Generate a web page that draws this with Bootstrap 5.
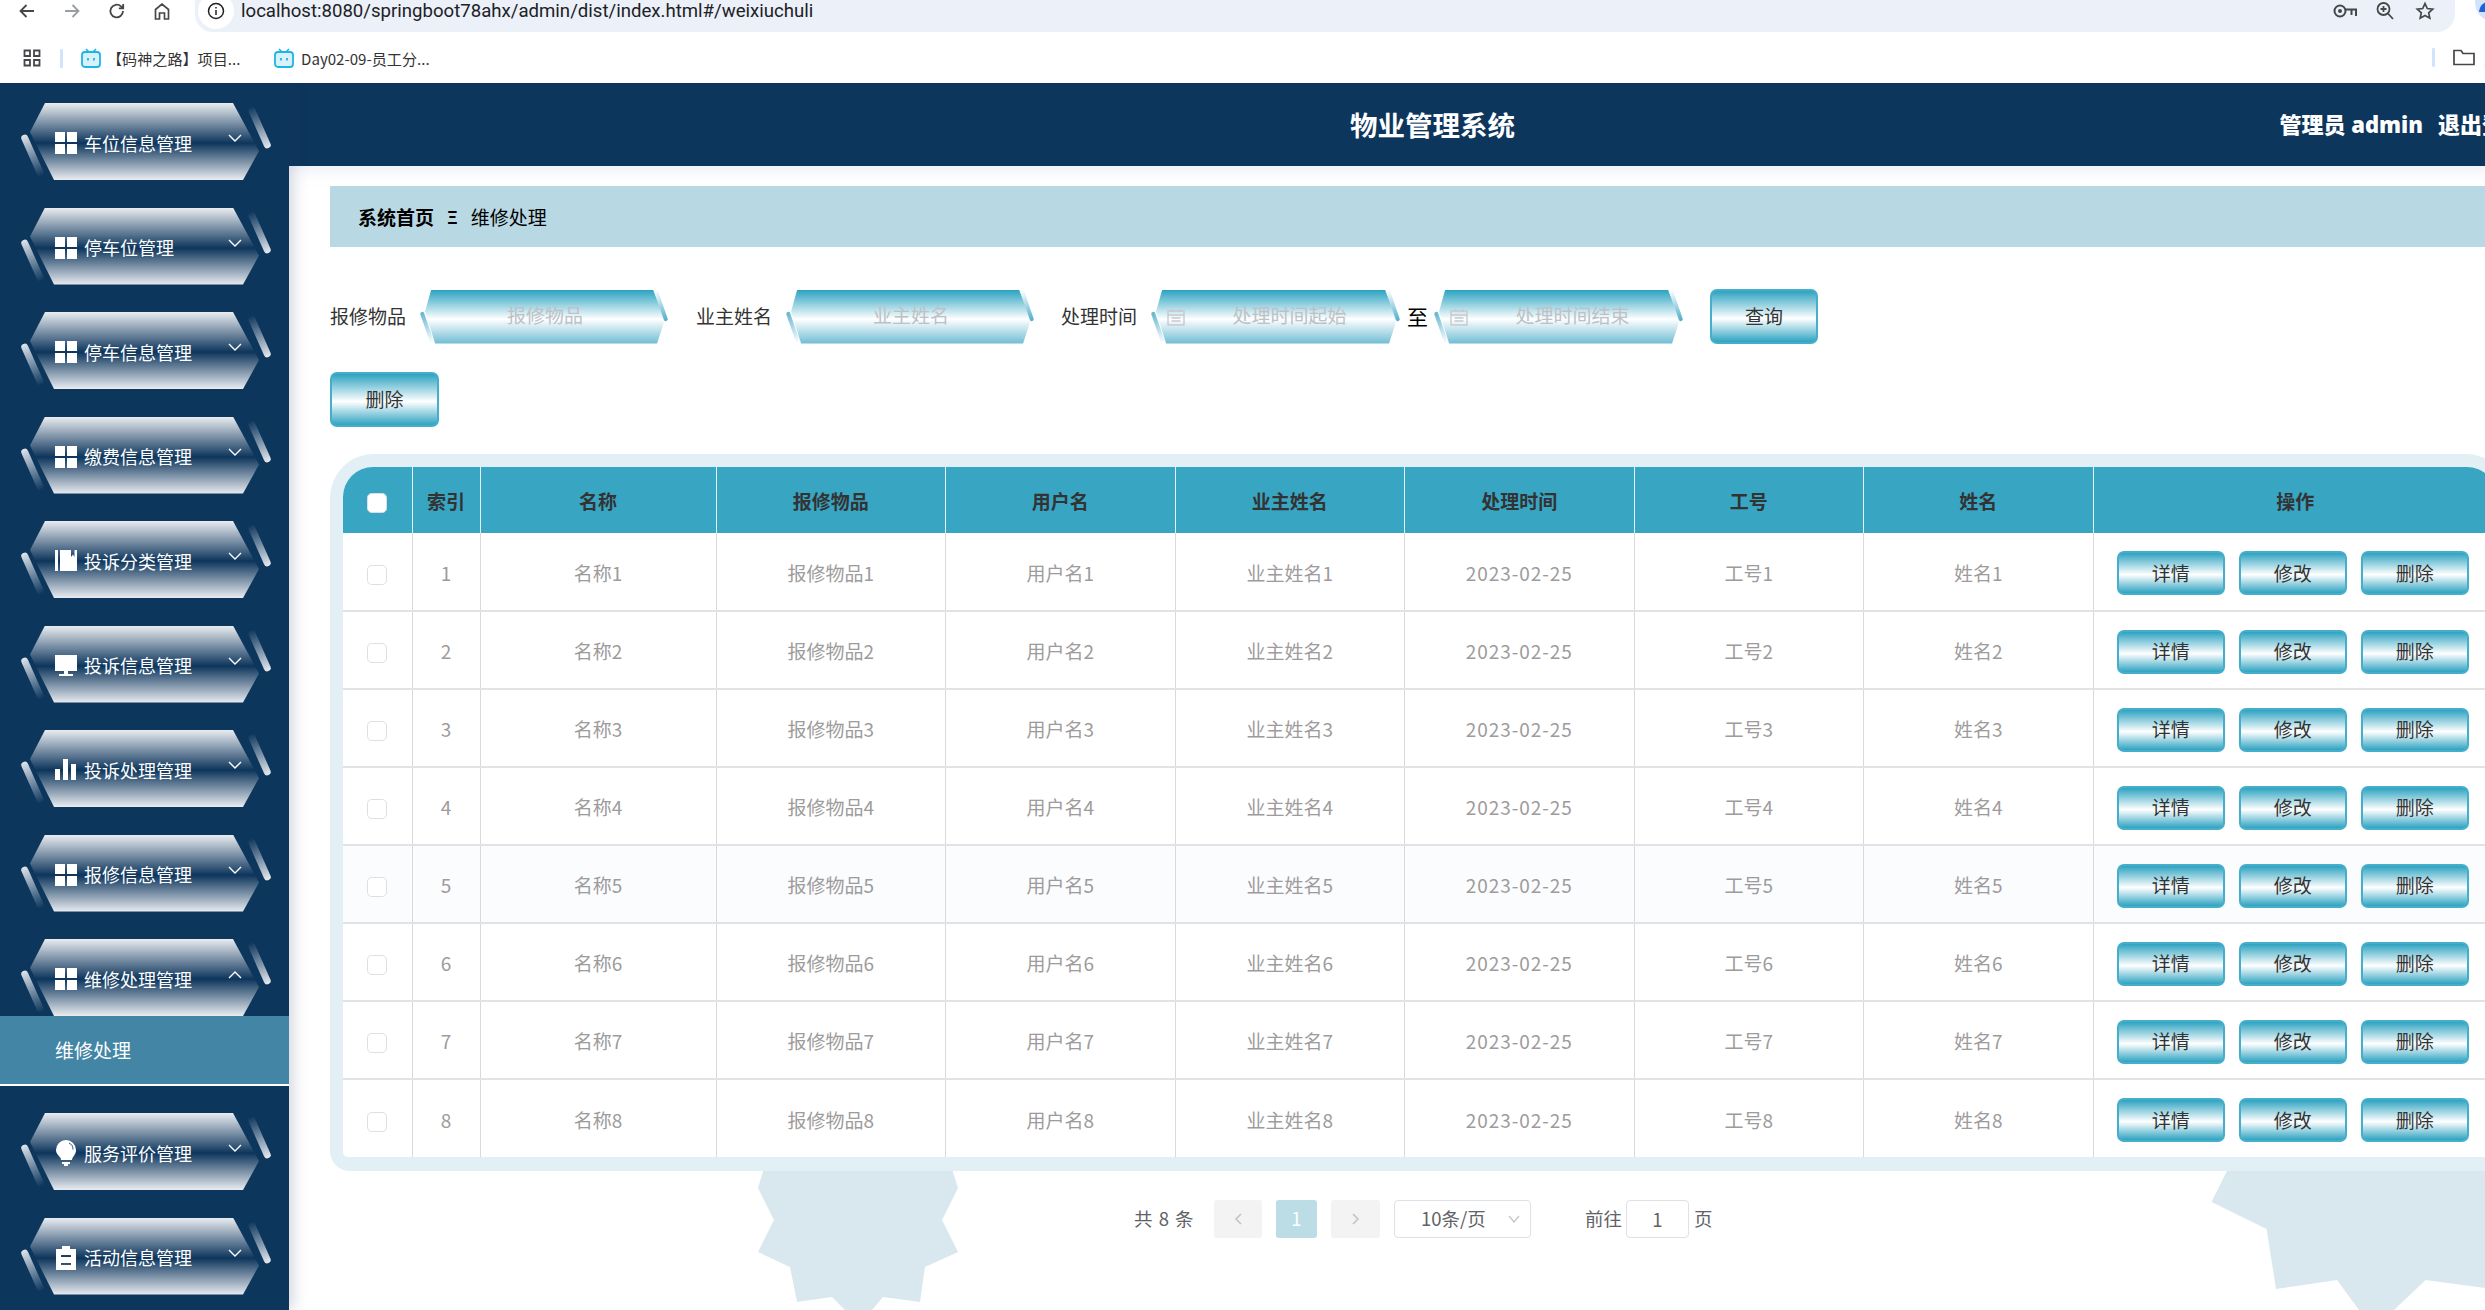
<!doctype html>
<html lang="zh-CN">
<head>
<meta charset="utf-8">
<title>物业管理系统</title>
<link href="https://cdn.jsdelivr.net/npm/bootstrap@5.3.0/dist/css/bootstrap.min.css" rel="stylesheet">
<style>
html,body{height:100%;margin:0;overflow:hidden;background:#fff}
body{font-family:"Noto Sans CJK SC","Noto Sans",sans-serif;font-size:19px;color:#333;width:2485px;height:1310px}
/* browser chrome */
.browser-top{height:83px;position:relative;background:#fff;overflow:hidden}
.tool-row{height:22px;display:flex;align-items:center}
.tool-ico{width:20px;height:20px;flex:none;display:block}
.tool-key{width:24px;height:16px;margin-right:-2px}
.tool-back{margin-left:17px}.tool-fwd{margin-left:25px}.tool-reload{margin-left:25px}.tool-home{margin-left:25px}
.addr-pill{margin-left:23px;flex:none;width:2260px;height:32px;align-self:flex-start;padding-bottom:10px;background:#ebf0f9;border-radius:0 0 18px 18px;display:flex;align-items:center}
.addr-info{width:36px;height:36px;border-radius:50%;background:#fff;flex:none;margin-left:3px;margin-top:-14px;margin-bottom:-14px;display:flex;align-items:center;justify-content:center}
.addr-text{font-family:Roboto,"Liberation Sans",sans-serif;font-size:18.6px;color:#202124;margin-left:7px;white-space:nowrap;line-height:22px}
.addr-tools{margin-left:auto;display:flex;align-items:center;gap:20px;margin-right:20px}
.avatar-dot{width:40px;height:40px;border-radius:50%;background:#d3e3fd;margin:-18px 0 0 20px;flex:none;overflow:hidden}
.mark-row{height:61px;display:flex;align-items:center;padding-top:11px;font-size:15.1px;color:#333;white-space:nowrap}
.apps-ico{margin-left:23px;width:18px;height:18px}
.mark-sep{width:3px;height:19px;background:#d3e3fd;flex:none;margin-left:19px;border-radius:1px}
.tv-ico{width:20px;height:20px;flex:none}
.mark-one{margin-left:18px;display:flex;align-items:center;gap:6px;width:193px}
.mark-one span{display:block;width:128px}
.mark-two{display:flex;align-items:center;gap:7px}
.mark-end{margin-left:auto;display:flex;align-items:center;margin-right:-60px}
.mark-end svg{margin-left:18px;margin-right:10px}
/* shell */
.app-shell{display:flex;height:1227px;overflow:hidden}
.side-panel{width:289px;flex:none;background:#0d365d;padding-top:20px;position:relative;z-index:3;box-shadow:4px 0 14px rgba(40,50,90,.2);overflow:hidden}
.side-menu{list-style:none;margin:0;padding:0}
.side-entry{position:relative;height:77px;margin-bottom:27.5px}
.side-entry.is-open{margin-bottom:0}
.side-entry::before,.side-entry::after{content:"";position:absolute;width:7px;height:45px;border-radius:4px;transform:rotate(-24deg)}
.side-entry::before{left:29px;top:30px;background:linear-gradient(#dfe5ec,rgba(223,229,236,0))}
.side-entry::after{left:256px;top:2px;background:linear-gradient(rgba(223,229,236,0),#e6eaef)}
.side-link{display:flex;align-items:center;height:77px;margin-left:30px;width:229px;padding:3px 0 0 25px;color:#fff;font-size:18px;text-decoration:none;white-space:nowrap;
 background:linear-gradient(#eaedf1,#0d355c 52%,#eaedf1);clip-path:polygon(15px 0,203px 0,229px 48px,213px 77px,24px 77px,0 29px)}
.side-link:hover{color:#fff}
.side-glyph{width:22px;height:22px;flex:none;margin-right:7px;fill:#fff}
.side-glyph.glyph-tall{height:26px}
.side-glyph.glyph-clip{height:24px}
.side-chev{width:14px;height:9px;flex:none;margin-left:auto;margin-right:17px;margin-top:-9px;fill:none;stroke:#fff;stroke-width:1.4}
.side-sub{background:#4285a5;height:68px;border-bottom:0;display:flex;align-items:center;padding-left:55px;color:#fff;font-size:19px;text-decoration:none;margin-bottom:2px}
.side-sub:hover{color:#fff}
.side-rule{height:2px;background:#fff;margin-top:-2px;margin-bottom:27px}
/* main */
.main-col{flex:1 1 auto;min-width:0;position:relative;overflow:hidden;background:#fff}
.site-bar{width:2288px;height:83px;background:#0d365d;display:flex;align-items:center;padding:0 51px 0 0;color:#fff;box-shadow:0 4px 16px rgba(90,120,200,.13);position:relative;z-index:1}
.site-title{margin-left:1061px;font-size:27.5px;font-weight:700;white-space:nowrap}
.site-user{margin-left:auto;font-size:22px;font-weight:700;display:flex;gap:15px;white-space:nowrap}
.site-user b{font-family:"Noto Sans","Noto Sans CJK SC",sans-serif}
.work-area{width:2180px;margin-left:41px;position:relative;padding-top:20px}
.crumb-bar{--bs-breadcrumb-divider:"Ξ";--bs-breadcrumb-item-padding-x:13px;--bs-breadcrumb-margin-bottom:0;--bs-breadcrumb-divider-color:#000;background:#b8d9e3;height:61px;padding:0 0 0 28px;align-items:center;color:#000;font-size:19px;margin:0}
.crumb-bar .breadcrumb-item{color:#000;line-height:1}
.crumb-bar .breadcrumb-item:first-child{font-weight:700}
.crumb-bar .breadcrumb-item+.breadcrumb-item::before{font-weight:700;font-size:17px;line-height:19px}
.query-row{margin-top:42px;height:55px;display:flex;align-items:center}
.query-label{width:76px;flex:none;margin-right:19px;white-space:nowrap;color:#333}
.hex-field{position:relative;width:240px;height:54px;flex:none}
.hex-field.is-wide{width:241px}
.hex-field::before,.hex-field::after{content:"";position:absolute;width:4px;height:33px;border-radius:2px;transform:rotate(-19deg)}
.hex-field::before{left:0;top:21px;background:linear-gradient(#5fb5cf,#fff)}
.hex-field::after{left:234px;top:-1px;background:linear-gradient(#fff,#4fadca)}
.hex-field.is-wide::after{left:235px}
.hex-input{height:54px;border:0;border-radius:0;padding:0 10px 4px;text-align:center;font-size:19px;color:#333;
 background:linear-gradient(#2ba3c1,#fff 54%,#6ebcd3);clip-path:polygon(2.6% 0,95% 0,100% 55%,96.7% 100%,4.2% 100%,0 41%)}
.hex-input::placeholder{color:#bfc0c5;opacity:1}
.hex-input:focus{background:linear-gradient(#2ba3c1,#fff 54%,#6ebcd3);box-shadow:none}
.hex-input.has-ico{padding-left:36px}
.cal-ico{position:absolute;left:11px;top:18px;width:18px;height:18px;fill:none;stroke:#c8c9cd;stroke-width:1.4;z-index:1}
.query-gap{margin-left:31px}
.query-gap.gap-b{margin-left:30px}
.query-to{width:21px;margin:0 11px 0 10px;font-size:21px;color:#000;flex:none;line-height:1}
.gloss-btn{--bs-btn-padding-x:0;--bs-btn-padding-y:0;--bs-btn-font-size:19px;--bs-btn-color:#333;--bs-btn-hover-color:#333;--bs-btn-border-width:2px;--bs-btn-border-color:#45aecb;--bs-btn-hover-border-color:#45aecb;--bs-btn-border-radius:7px;
 background:linear-gradient(#2ea3c1,#fff 54%,#2ea3c1);flex:none}
.gloss-btn:hover{background:linear-gradient(#2ea3c1,#fff 54%,#2ea3c1)}
.btn-query{width:108px;height:55px;margin-left:30px}
.btn-remove{width:109px;height:55px}
.action-row{margin-top:28px;height:55px}
.grid-shell{margin-top:27px;width:2180px;padding:13px 13px 14px;background:#e2eff4;border-radius:44px 44px 20px 20px;position:relative;z-index:1}
.grid-inner{background:#fff;border-radius:30px 30px 5px 5px;overflow:hidden}
.repair-grid{--bs-table-bg:transparent;--bs-table-border-color:#dcdcdc;table-layout:fixed;width:2154px;margin:0;border-collapse:collapse;color:#9d9b9b;font-size:19px;text-align:center}
.repair-grid>:not(caption)>*>*{padding:3px 0 0;vertical-align:middle;border-width:0 1px 2px 1px;border-style:solid;border-color:#dcdcdc #d9d9d9 #e0e2e6;background:transparent;color:#9d9b9b;box-shadow:none}
.repair-grid tr>*:first-child{border-left:0}
.repair-grid tr>*:last-child{border-right:0}
.repair-grid tbody tr:last-child td{border-bottom:0}
.repair-grid>thead>tr>th{height:66px;padding-top:3px;background:#38a5c3;color:#333;font-weight:700;border-color:#e4f1f5;border-bottom:0}
.repair-grid tbody td{height:78px}
.repair-grid>tbody>tr.row-hover>td{background:#fbfcfe}
.date-cell{letter-spacing:.95px}
.c-a{width:69px}.c-b{width:68px}.c-c{width:236px}.c-d{width:229.5px}.c-e{width:229.5px}
.tick-box{width:20px;height:20px;margin:0;border:1.5px solid #dcdfe6;border-radius:3px;vertical-align:middle;float:none;position:relative;top:-1px}
.tick-box.form-check-input{margin-top:0}
.row-btns{display:flex;gap:13.5px;padding-left:23px}
.row-btns .gloss-btn{width:108.5px;height:44px}
.pager-row{margin-top:28px;height:39px;display:flex;align-items:center;padding-left:804px;font-size:18.5px;color:#606266;white-space:nowrap;position:relative;z-index:1}
.pager-total{word-spacing:2px;width:61px;flex:none}
.pager-cell{height:38px;display:flex;align-items:center;justify-content:center;border-radius:3px;background:#f3f3f4;color:#c0c4cc;flex:none}
.pager-prev{width:48px;margin-left:19px}
.pager-cur{width:41px;margin-left:14px;background:#bcdce6;color:#fff}
.pager-next{width:49px;margin-left:14px}
.pager-size{margin-left:14px;width:137px;height:38px;flex:none;border:1.5px solid #dfe0e8;border-radius:4px;display:flex;align-items:center;padding-left:26px;color:#606266}
.pager-size svg{margin-left:auto;margin-right:10px;width:12px;height:8px;fill:none;stroke:#c0c4cc;stroke-width:1.2}
.pager-goto{margin-left:54px;width:37px;flex:none}
.pager-input{width:63px;height:38px;flex:none;margin:0 5px 0 4px;border:1.5px solid #dfe0e8;border-radius:4px;text-align:center;padding:0;font-size:18.5px;color:#606266}
.gear-back{position:absolute;left:0;top:0;width:2196px;height:1227px;z-index:0;fill:#d9e8ee;pointer-events:none}
</style>
</head>
<body>
<div class="browser-top">
  <div class="tool-row">
    <svg class="tool-ico tool-back" viewBox="0 0 20 20" fill="none" stroke="#45474a" stroke-width="1.8"><path d="M17 10H4M9.5 4 3.5 10l6 6"/></svg>
    <svg class="tool-ico tool-fwd" viewBox="0 0 20 20" fill="none" stroke="#9a9da1" stroke-width="1.8"><path d="M3 10h13M10.5 4l6 6-6 6"/></svg>
    <svg class="tool-ico tool-reload" viewBox="0 0 20 20" fill="none" stroke="#45474a" stroke-width="1.8"><path d="M16 10a6.3 6.3 0 1 1-2-4.6L16 7.2M16.2 3v4.4h-4.4"/></svg>
    <svg class="tool-ico tool-home" viewBox="0 0 20 20" fill="none" stroke="#45474a" stroke-width="1.7"><path d="M3.5 18V8.5L10 3l6.5 5.5V18h-4v-6h-5v6z"/></svg>
    <div class="addr-pill">
      <div class="addr-info"><svg width="18" height="18" viewBox="0 0 18 18" fill="none" stroke="#202124" stroke-width="1.5"><circle cx="9" cy="9" r="7.5"/><path d="M9 8v5M9 5v1.5"/></svg></div>
      <div class="addr-text">localhost:8080/springboot78ahx/admin/dist/index.html#/weixiuchuli</div>
      <div class="addr-tools">
        <svg class="tool-ico tool-key" viewBox="0 0 24 16" fill="none" stroke="#45474a" stroke-width="2"><circle cx="7" cy="8" r="5.5"/><circle cx="7" cy="8" r="2" fill="#45474a" stroke="none"/><path d="M12.5 6.5H23V13M18.5 7v5"/></svg>
        <svg class="tool-ico" viewBox="0 0 20 20" fill="none" stroke="#45474a" stroke-width="1.8"><circle cx="8.5" cy="8" r="6"/><path d="M13 12.5l5 5.5M5.5 8h6M8.5 5v6"/></svg>
        <svg class="tool-ico" viewBox="0 0 20 20" fill="none" stroke="#45474a" stroke-width="1.7"><path d="M10 2.5l2.3 5 5.400.6-4 3.700 1.100 5.400-4.800-2.700-4.800 2.700 1.100-5.400-4-3.700 5.400-.6z"/></svg>
      </div>
    </div>
    <div class="avatar-dot"><svg width="40" height="40" viewBox="0 0 40 40" fill="#1a62d6"><circle cx="15" cy="13" r="6"/><path d="M4 30c1-8 6-10 11-10s10 2 11 10z"/></svg></div>
  </div>
  <div class="mark-row">
    <svg class="apps-ico" viewBox="0 0 18 18" fill="none" stroke="#45474a" stroke-width="1.8"><path d="M1.5 1.5h5.5v5.500H1.5zM11 1.500h5.500v5.500H11zM1.500 11h5.500v5.500H1.500zM11 11h5.500v5.500H11z"/></svg>
    <div class="mark-sep"></div>
    <div class="mark-one"><svg class="tv-ico" viewBox="0 0 20 20"><path d="M5 1l3 3M15 1l-3 3" stroke="#1db4e8" stroke-width="1.6" fill="none"/><rect x="1" y="4" width="18" height="15" rx="3" fill="#d8f2fb" stroke="#1db4e8" stroke-width="1.8"/><path d="M7 10v2.500M13 10v2.500" stroke="#1db4e8" stroke-width="1.8"/></svg><span>【码神之路】项目...</span></div>
    <div class="mark-two"><svg class="tv-ico" viewBox="0 0 20 20"><path d="M5 1l3 3M15 1l-3 3" stroke="#1db4e8" stroke-width="1.6" fill="none"/><rect x="1" y="4" width="18" height="15" rx="3" fill="#d8f2fb" stroke="#1db4e8" stroke-width="1.8"/><path d="M7 10v2.500M13 10v2.500" stroke="#1db4e8" stroke-width="1.8"/></svg><span>Day02-09-员工分...</span></div>
    <div class="mark-end"><div class="mark-sep"></div><svg width="22" height="17" viewBox="0 0 22 17" fill="none" stroke="#45474a" stroke-width="1.7"><path d="M1 15.500V1.500h7l2 3h11v11z"/></svg><span>所有书签</span></div>
  </div>
</div>
<div class="app-shell">
  <aside class="side-panel">
    <ul class="side-menu">
      <li class="side-entry"><a class="side-link" href="#"><svg class="side-glyph" viewBox="0 0 22 22"><path d="M0 0h10v10H0zM12 0h10v10H12zM0 12h10v10H0zM12 12h10v10H12z"/></svg>车位信息管理<svg class="side-chev" viewBox="0 0 14 9"><path d="M1 1l6 6 6-6"/></svg></a></li>
      <li class="side-entry"><a class="side-link" href="#"><svg class="side-glyph" viewBox="0 0 22 22"><path d="M0 0h10v10H0zM12 0h10v10H12zM0 12h10v10H0zM12 12h10v10H12z"/></svg>停车位管理<svg class="side-chev" viewBox="0 0 14 9"><path d="M1 1l6 6 6-6"/></svg></a></li>
      <li class="side-entry"><a class="side-link" href="#"><svg class="side-glyph" viewBox="0 0 22 22"><path d="M0 0h10v10H0zM12 0h10v10H12zM0 12h10v10H0zM12 12h10v10H12z"/></svg>停车信息管理<svg class="side-chev" viewBox="0 0 14 9"><path d="M1 1l6 6 6-6"/></svg></a></li>
      <li class="side-entry"><a class="side-link" href="#"><svg class="side-glyph" viewBox="0 0 22 22"><path d="M0 0h10v10H0zM12 0h10v10H12zM0 12h10v10H0zM12 12h10v10H12z"/></svg>缴费信息管理<svg class="side-chev" viewBox="0 0 14 9"><path d="M1 1l6 6 6-6"/></svg></a></li>
      <li class="side-entry"><a class="side-link" href="#"><svg class="side-glyph" viewBox="0 0 22 22"><path d="M0 0h3v21H0zM5 0h11v7l2-2.5L19.500 7V0H22v21H5z"/></svg>投诉分类管理<svg class="side-chev" viewBox="0 0 14 9"><path d="M1 1l6 6 6-6"/></svg></a></li>
      <li class="side-entry"><a class="side-link" href="#"><svg class="side-glyph" viewBox="0 0 22 22"><path d="M0 0h22v16H13v3h5v2H4v-2h5v-3H0z"/></svg>投诉信息管理<svg class="side-chev" viewBox="0 0 14 9"><path d="M1 1l6 6 6-6"/></svg></a></li>
      <li class="side-entry"><a class="side-link" href="#"><svg class="side-glyph" viewBox="0 0 22 22"><path d="M0 10h5v11H0zM8 0h5v21H8zM16 5h5v16h-5z"/></svg>投诉处理管理<svg class="side-chev" viewBox="0 0 14 9"><path d="M1 1l6 6 6-6"/></svg></a></li>
      <li class="side-entry"><a class="side-link" href="#"><svg class="side-glyph" viewBox="0 0 22 22"><path d="M0 0h10v10H0zM12 0h10v10H12zM0 12h10v10H0zM12 12h10v10H12z"/></svg>报修信息管理<svg class="side-chev" viewBox="0 0 14 9"><path d="M1 1l6 6 6-6"/></svg></a></li>
      <li class="side-entry is-open"><a class="side-link" href="#"><svg class="side-glyph" viewBox="0 0 22 22"><path d="M0 0h10v10H0zM12 0h10v10H12zM0 12h10v10H0zM12 12h10v10H12z"/></svg>维修处理管理<svg class="side-chev" viewBox="0 0 14 9"><path d="M1 8l6-6 6 6"/></svg></a></li>
      <li><a class="side-sub" href="#">维修处理</a><div class="side-rule"></div></li>
      <li class="side-entry"><a class="side-link" href="#"><svg class="side-glyph glyph-tall" viewBox="0 0 22 26"><path d="M11 0a10 10 0 0 1 10 10c0 4-2.5 6-3.5 8-.5 1-.5 2-.5 2H6s0-1-.5-2C4.500 16 1 14 1 10A10 10 0 0 1 11 0zM7 22h8v2H13v2H9v-2H7z"/><path d="M14 3a7 7 0 0 1 4 6.500" fill="none" stroke="#2b5577" stroke-width="1"/></svg>服务评价管理<svg class="side-chev" viewBox="0 0 14 9"><path d="M1 1l6 6 6-6"/></svg></a></li>
      <li class="side-entry"><a class="side-link" href="#"><svg class="side-glyph glyph-clip" viewBox="0 0 22 24"><path d="M1 3h6V0h8v3h6v21H1zM6 9v2h10V9zM6 17v2h10v-2z" fill-rule="evenodd"/></svg>活动信息管理<svg class="side-chev" viewBox="0 0 14 9"><path d="M1 1l6 6 6-6"/></svg></a></li>
    </ul>
  </aside>
  <main class="main-col">
    <svg class="gear-back" viewBox="0 0 2196 1227">
      <path d="M501 1000H636L669 1105L653 1137L669 1169L636 1184L631 1219L594 1214L583 1227H556L543 1214L508 1219L501 1184L469 1169L485 1137L469 1105Z"/>
      <path d="M1938 1088L1922.500 1119L1977.600 1146L1987 1206L2048 1197L2070 1227H2105L2136.600 1197L2196 1205V1088Z"/>
    </svg>
    <header class="site-bar">
      <div class="site-title">物业管理系统</div>
      <div class="site-user"><b>管理员 admin</b><b>退出登录</b></div>
    </header>
    <div class="work-area">
      <nav aria-label="breadcrumb"><ol class="breadcrumb crumb-bar"><li class="breadcrumb-item">系统首页</li><li class="breadcrumb-item active">维修处理</li></ol></nav>
      <form class="query-row">
        <label class="query-label">报修物品</label>
        <div class="hex-field"><input class="form-control hex-input" placeholder="报修物品"></div>
        <label class="query-label query-gap">业主姓名</label>
        <div class="hex-field"><input class="form-control hex-input" placeholder="业主姓名"></div>
        <label class="query-label query-gap gap-b">处理时间</label>
        <div class="hex-field is-wide"><svg class="cal-ico" viewBox="0 0 18 18"><path d="M1 3h16v14H1zM1 7h16M5 1v3M13 1v3M4.5 10h9M4.5 13h9" /></svg><input class="form-control hex-input has-ico" placeholder="处理时间起始"></div>
        <span class="query-to">至</span>
        <div class="hex-field is-wide"><svg class="cal-ico" viewBox="0 0 18 18"><path d="M1 3h16v14H1zM1 7h16M5 1v3M13 1v3M4.5 10h9M4.5 13h9" /></svg><input class="form-control hex-input has-ico" placeholder="处理时间结束"></div>
        <button type="button" class="btn gloss-btn btn-query">查询</button>
      </form>
      <div class="action-row"><button type="button" class="btn gloss-btn btn-remove">删除</button></div>
      <div class="grid-shell"><div class="grid-inner">
        <table class="table repair-grid">
          <colgroup><col class="c-a"><col class="c-b"><col class="c-c"><col class="c-d"><col class="c-e"><col class="c-e"><col class="c-e"><col class="c-e"><col class="c-e"><col></colgroup>
          <thead><tr><th><input class="form-check-input tick-box" type="checkbox"></th><th>索引</th><th>名称</th><th>报修物品</th><th>用户名</th><th>业主姓名</th><th>处理时间</th><th>工号</th><th>姓名</th><th>操作</th></tr></thead>
          <tbody>
            <tr><td><input class="form-check-input tick-box" type="checkbox"></td><td>1</td><td>名称1</td><td>报修物品1</td><td>用户名1</td><td>业主姓名1</td><td class="date-cell">2023-02-25</td><td>工号1</td><td>姓名1</td><td><div class="row-btns"><button type="button" class="btn gloss-btn">详情</button><button type="button" class="btn gloss-btn">修改</button><button type="button" class="btn gloss-btn">删除</button></div></td></tr>
            <tr><td><input class="form-check-input tick-box" type="checkbox"></td><td>2</td><td>名称2</td><td>报修物品2</td><td>用户名2</td><td>业主姓名2</td><td class="date-cell">2023-02-25</td><td>工号2</td><td>姓名2</td><td><div class="row-btns"><button type="button" class="btn gloss-btn">详情</button><button type="button" class="btn gloss-btn">修改</button><button type="button" class="btn gloss-btn">删除</button></div></td></tr>
            <tr><td><input class="form-check-input tick-box" type="checkbox"></td><td>3</td><td>名称3</td><td>报修物品3</td><td>用户名3</td><td>业主姓名3</td><td class="date-cell">2023-02-25</td><td>工号3</td><td>姓名3</td><td><div class="row-btns"><button type="button" class="btn gloss-btn">详情</button><button type="button" class="btn gloss-btn">修改</button><button type="button" class="btn gloss-btn">删除</button></div></td></tr>
            <tr><td><input class="form-check-input tick-box" type="checkbox"></td><td>4</td><td>名称4</td><td>报修物品4</td><td>用户名4</td><td>业主姓名4</td><td class="date-cell">2023-02-25</td><td>工号4</td><td>姓名4</td><td><div class="row-btns"><button type="button" class="btn gloss-btn">详情</button><button type="button" class="btn gloss-btn">修改</button><button type="button" class="btn gloss-btn">删除</button></div></td></tr>
            <tr class="row-hover"><td><input class="form-check-input tick-box" type="checkbox"></td><td>5</td><td>名称5</td><td>报修物品5</td><td>用户名5</td><td>业主姓名5</td><td class="date-cell">2023-02-25</td><td>工号5</td><td>姓名5</td><td><div class="row-btns"><button type="button" class="btn gloss-btn">详情</button><button type="button" class="btn gloss-btn">修改</button><button type="button" class="btn gloss-btn">删除</button></div></td></tr>
            <tr><td><input class="form-check-input tick-box" type="checkbox"></td><td>6</td><td>名称6</td><td>报修物品6</td><td>用户名6</td><td>业主姓名6</td><td class="date-cell">2023-02-25</td><td>工号6</td><td>姓名6</td><td><div class="row-btns"><button type="button" class="btn gloss-btn">详情</button><button type="button" class="btn gloss-btn">修改</button><button type="button" class="btn gloss-btn">删除</button></div></td></tr>
            <tr><td><input class="form-check-input tick-box" type="checkbox"></td><td>7</td><td>名称7</td><td>报修物品7</td><td>用户名7</td><td>业主姓名7</td><td class="date-cell">2023-02-25</td><td>工号7</td><td>姓名7</td><td><div class="row-btns"><button type="button" class="btn gloss-btn">详情</button><button type="button" class="btn gloss-btn">修改</button><button type="button" class="btn gloss-btn">删除</button></div></td></tr>
            <tr><td><input class="form-check-input tick-box" type="checkbox"></td><td>8</td><td>名称8</td><td>报修物品8</td><td>用户名8</td><td>业主姓名8</td><td class="date-cell">2023-02-25</td><td>工号8</td><td>姓名8</td><td><div class="row-btns"><button type="button" class="btn gloss-btn">详情</button><button type="button" class="btn gloss-btn">修改</button><button type="button" class="btn gloss-btn">删除</button></div></td></tr>
          </tbody>
        </table>
      </div></div>
      <div class="pager-row">
        <span class="pager-total">共 8 条</span>
        <span class="pager-cell pager-prev"><svg width="9" height="12" viewBox="0 0 9 12" fill="none" stroke="#c0c4cc" stroke-width="1.6"><path d="M7 1 2 6l5 5"/></svg></span>
        <span class="pager-cell pager-cur">1</span>
        <span class="pager-cell pager-next"><svg width="9" height="12" viewBox="0 0 9 12" fill="none" stroke="#c0c4cc" stroke-width="1.6"><path d="M2 1l5 5-5 5"/></svg></span>
        <div class="pager-size"><span>10条/页</span><svg viewBox="0 0 12 8"><path d="M1 1l5 6 5-6"/></svg></div>
        <span class="pager-goto">前往</span>
        <input class="form-control pager-input" value="1">
        <span>页</span>
      </div>
    </div>
  </main>
</div>
<script src="https://cdn.jsdelivr.net/npm/bootstrap@5.3.0/dist/js/bootstrap.bundle.min.js"></script>
</body>
</html>
